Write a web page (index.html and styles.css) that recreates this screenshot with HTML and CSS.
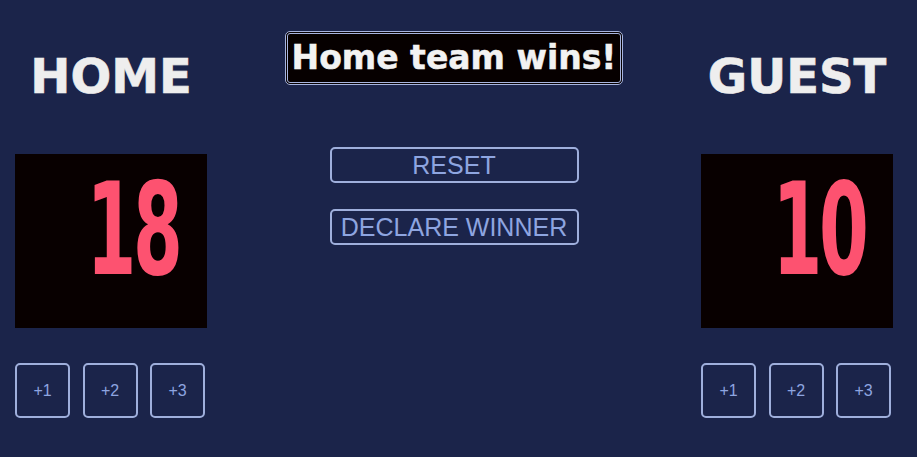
FILE: index.html
```html
<!DOCTYPE html>
<html lang="en">
<head>
<meta charset="utf-8">
<title>Scoreboard</title>
<link rel="stylesheet" href="styles.css">
</head>
<body>
<main class="board">
  <section class="team">
    <h2 class="team-name">HOME</h2>
    <div class="score"><span class="digits">18</span></div>
    <div class="adds">
      <button class="add">+1</button>
      <button class="add">+2</button>
      <button class="add">+3</button>
    </div>
  </section>
  <section class="middle">
    <div class="result">Home team wins!</div>
    <button class="ctl ctl-reset">RESET</button>
    <button class="ctl ctl-declare">DECLARE WINNER</button>
  </section>
  <section class="team">
    <h2 class="team-name">GUEST</h2>
    <div class="score"><span class="digits">10</span></div>
    <div class="adds">
      <button class="add">+1</button>
      <button class="add">+2</button>
      <button class="add">+3</button>
    </div>
  </section>
</main>
</body>
</html>
```

FILE: styles.css
```css
html, body {
  margin: 0;
  padding: 0;
}
body {
  background: #1b244a;
  width: 917px;
  height: 457px;
  overflow: hidden;
  font-family: "DejaVu Sans", Verdana, sans-serif;
}
.board {
  display: grid;
  grid-template-columns: 192px 1fr 192px;
  padding: 0 24px 0 15px;
}
.team {
  display: flex;
  flex-direction: column;
  align-items: center;
  padding-top: 48px;
}
.team-name {
  margin: 0;
  font-family: "DejaVu Sans", Verdana, sans-serif;
  font-weight: bold;
  font-size: 48px;
  line-height: 56px;
  color: #eeeeee;
  -webkit-text-stroke: 0.6px #eeeeee;
}
.score {
  margin-top: 50px;
  width: 192px;
  height: 174px;
  background: #080000;
  display: flex;
  align-items: center;
  justify-content: center;
  box-sizing: border-box;
  padding: 0 0 22px 44px;
}
.digits {
  display: inline-block;
  font-family: "DejaVu Sans", sans-serif;
  font-weight: bold;
  font-size: 128px;
  line-height: 128px;
  color: #fd5270;
  transform: scaleX(0.56);
  letter-spacing: -6px;
}
.adds {
  margin-top: 35px;
  align-self: stretch;
  display: flex;
  gap: 12.5px;
}
.add {
  width: 55px;
  height: 55px;
  box-sizing: border-box;
  border: 2px solid #9fafdc;
  border-radius: 5px;
  background: transparent;
  color: #8ea5e0;
  font-family: "Liberation Sans", Arial, sans-serif;
  font-size: 16px;
  padding: 0;
}
.middle {
  display: flex;
  flex-direction: column;
  align-items: center;
  padding-top: 31px;
}
.result {
  border: 3px double #a6b3de;
  border-radius: 5px;
  background: #060000;
  color: #f2f2f2;
  font-family: "DejaVu Sans", Verdana, sans-serif;
  font-weight: bold;
  font-size: 33px;
  line-height: 38px;
  padding: 5px 4px;
  white-space: nowrap;
  -webkit-text-stroke: 0.5px #f2f2f2;
}
.ctl {
  width: 249px;
  height: 36px;
  box-sizing: border-box;
  border: 2px solid #9fafdc;
  border-radius: 5px;
  background: transparent;
  color: #8ea5e0;
  font-family: "Liberation Sans", Arial, sans-serif;
  font-size: 25px;
  line-height: 30px;
  padding: 0;
}
.ctl-reset {
  margin-top: 62px;
}
.ctl-declare {
  margin-top: 26px;
}
```
